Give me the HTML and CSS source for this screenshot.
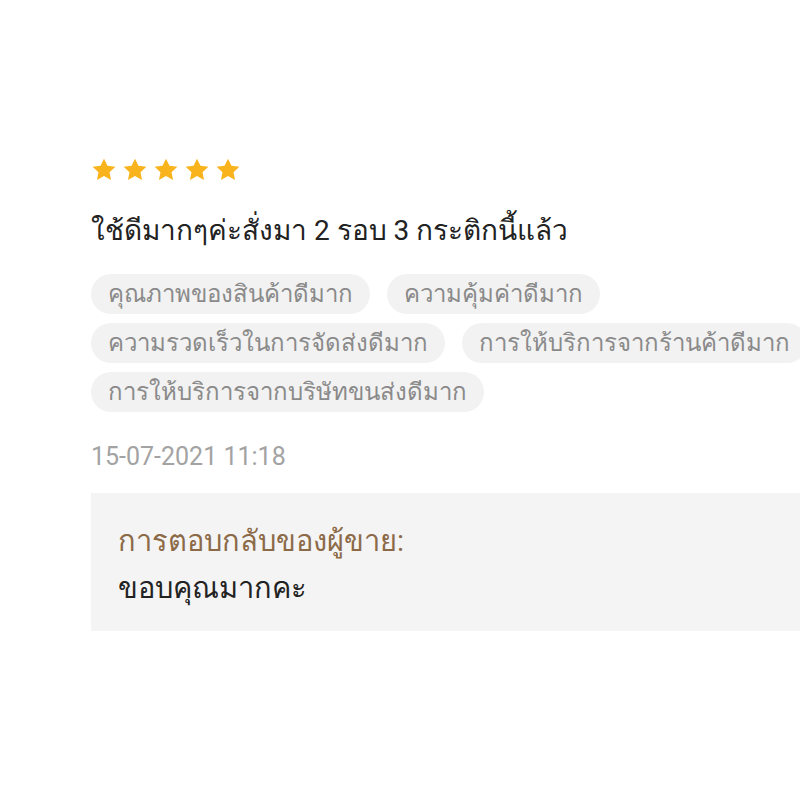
FILE: index.html
```html
<!DOCTYPE html>
<html lang="th">
<head>
    <meta charset="UTF-8">
    <meta name="viewport" content="width=device-width, initial-scale=1.0">
    <title>รีวิวสินค้า</title>
    <link rel="stylesheet" href="styles.css">
</head>
<body>
    <div class="review">
        <div class="stars">
            <svg class="star" viewBox="0 0 24 24"><path d="M12 1.5l3.2 6.6 7.3.9-5.4 5 1.4 7.2L12 17.6l-6.5 3.6 1.4-7.2-5.4-5 7.3-.9z"/></svg>
            <svg class="star" viewBox="0 0 24 24"><path d="M12 1.5l3.2 6.6 7.3.9-5.4 5 1.4 7.2L12 17.6l-6.5 3.6 1.4-7.2-5.4-5 7.3-.9z"/></svg>
            <svg class="star" viewBox="0 0 24 24"><path d="M12 1.5l3.2 6.6 7.3.9-5.4 5 1.4 7.2L12 17.6l-6.5 3.6 1.4-7.2-5.4-5 7.3-.9z"/></svg>
            <svg class="star" viewBox="0 0 24 24"><path d="M12 1.5l3.2 6.6 7.3.9-5.4 5 1.4 7.2L12 17.6l-6.5 3.6 1.4-7.2-5.4-5 7.3-.9z"/></svg>
            <svg class="star" viewBox="0 0 24 24"><path d="M12 1.5l3.2 6.6 7.3.9-5.4 5 1.4 7.2L12 17.6l-6.5 3.6 1.4-7.2-5.4-5 7.3-.9z"/></svg>
        </div>

        <p class="comment">ใช้ดีมากๆค่ะสั่งมา 2 รอบ 3 กระติกนี้แล้ว</p>

        <div class="tags">
            <span class="tag">คุณภาพของสินค้าดีมาก</span>
            <span class="tag">ความคุ้มค่าดีมาก</span>
            <span class="tag">ความรวดเร็วในการจัดส่งดีมาก</span>
            <span class="tag">การให้บริการจากร้านค้าดีมาก</span>
            <span class="tag">การให้บริการจากบริษัทขนส่งดีมาก</span>
        </div>

        <div class="date">15-07-2021 11:18</div>

        <div class="reply">
            <div class="reply-title">การตอบกลับของผู้ขาย:</div>
            <div class="reply-text">ขอบคุณมากคะ</div>
        </div>
    </div>
</body>
</html>
```

FILE: styles.css
```css
* {
    margin: 0;
    padding: 0;
    box-sizing: border-box;
}

body {
    background-color: #ffffff;
    font-family: Roboto, "Noto Sans", sans-serif;
    color: #222;
    width: 800px;
    height: 800px;
    overflow: hidden;
}

.review {
    padding: 157px 0 0 91px;
}

.stars {
    display: flex;
    gap: 5px;
    height: 26px;
}

.star {
    width: 26px;
    height: 26px;
    fill: #f9b31c;
}

.comment {
    margin-top: 31px;
    font-size: 28px;
    line-height: 34px;
    color: #222;
}

/* the chip list runs a little past the right edge of the screen */
.tags {
    margin-top: 26px;
    width: 730px;
    display: flex;
    flex-wrap: wrap;
    column-gap: 17px;
    row-gap: 9px;
}

.tag {
    background-color: #f2f2f2;
    color: #8a8a8a;
    font-size: 24px;
    line-height: 40px;
    height: 40px;
    padding: 0 17px;
    border-radius: 20px;
    white-space: nowrap;
}

.date {
    margin-top: 30px;
    font-size: 25px;
    color: #a3a3a3;
    line-height: 30px;
}

.reply {
    margin-top: 21px;
    background-color: #f4f4f4;
    padding: 32px 27px 0;
    height: 138px;
}

.reply-title {
    color: #8c6a48;
    font-size: 29px;
    line-height: 32px;
}

.reply-text {
    margin-top: 15px;
    font-size: 29px;
    line-height: 32px;
    color: #222;
}
```
